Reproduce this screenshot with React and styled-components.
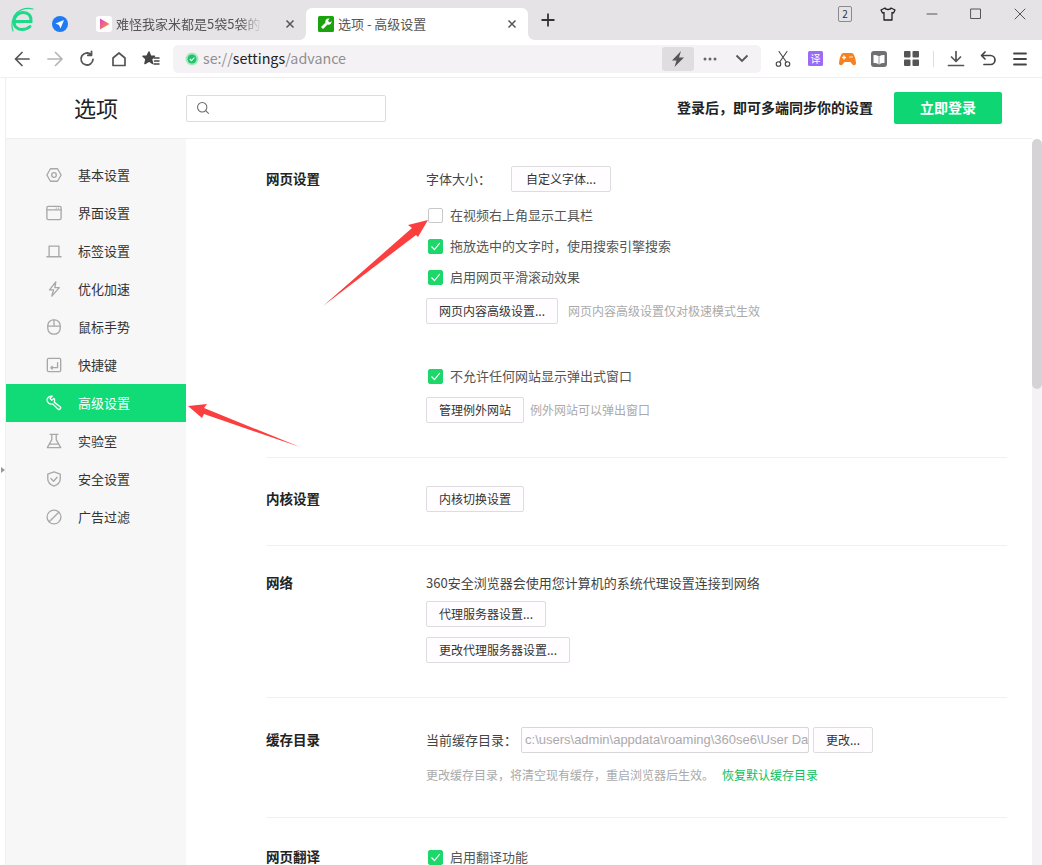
import styled, { createGlobalStyle } from "styled-components";

const GlobalStyle = createGlobalStyle`
  html, body { margin: 0; padding: 0; height: 100%; overflow: hidden; background: #fff; }
  body { font-family: "Noto Sans CJK SC", "Liberation Sans", sans-serif; font-size: 13px; color: #333; }
  * { box-sizing: border-box; }
`;

const Window = styled.div`
  position: relative;
  display: flex;
  flex-direction: column;
  height: 100vh;
  overflow: hidden;
`;

const TabStrip = styled.div`
  display: flex;
  height: 40px;
  flex: none;
  background: #e6e3e7;
  align-items: flex-end;
`;
const Logo = styled.div`
  width: 46px;
  height: 40px;
  padding: 7px 0 0 11px;
`;
const PinnedTab = styled.div`
  width: 42px;
  height: 40px;
  padding: 16px 0 0 6px;
`;
const Tab = styled.div`
  position: relative;
  display: flex;
  flex: none;
  align-items: center;
  height: 32px;
  width: ${(p) => (p.$active ? "222px" : "218px")};
  padding: 0 0 0 ${(p) => (p.$active ? "12px" : "8px")};
  background: ${(p) => (p.$active ? "#fff" : "transparent")};
  border-radius: 6px 6px 0 0;
  gap: 4px;
  color: #555;
  font-size: 13px;
  ${(p) =>
    p.$active &&
    `
    &::before, &::after {
      content: "";
      position: absolute;
      bottom: 0;
      width: 6px;
      height: 6px;
    }
    &::before { left: -6px; background: radial-gradient(circle at 0 0, #e6e3e7 5.5px, #fff 6px); }
    &::after { right: -6px; background: radial-gradient(circle at 100% 0, #e6e3e7 5.5px, #fff 6px); }
  `}
`;
const TabTitle = styled.span`
  width: ${(p) => (p.$active ? "164px" : "146px")};
  margin-top: -2px;
  white-space: nowrap;
  overflow: hidden;
  mask-image: ${(p) => (p.$active ? "none" : "linear-gradient(to right, #000 85%, transparent)")};
`;
const TabClose = styled.span`
  display: flex;
  margin-left: ${(p) => (p.$active ? "0" : "18px")};
`;
const NewTab = styled.div`
  width: 40px;
  height: 40px;
  display: flex;
  align-items: center;
  justify-content: center;
  padding-bottom: 1px;
`;
const WindowControls = styled.div`
  display: flex;
  margin-left: auto;
  align-self: flex-start;
  height: 28px;
`;
const WinButton = styled.div`
  width: 44px;
  height: 28px;
  display: flex;
  align-items: center;
  justify-content: center;
`;
const PageCount = styled.span`
  width: 14px;
  height: 16px;
  margin-left: 2px;
  border: 1px solid #8a8a8a;
  border-radius: 2px;
  font-size: 10px;
  line-height: 14px;
  text-align: center;
  color: #333;
`;

const Toolbar = styled.div`
  display: flex;
  align-items: center;
  height: 38px;
  flex: none;
  background: #fff;
  border-bottom: 1px solid #eeeeee;
  padding: 0 6px 0 7px;
`;
const ToolButton = styled.div`
  width: 32px;
  height: 32px;
  flex: none;
  display: flex;
  align-items: center;
  justify-content: center;
`;
const AddressBar = styled.div`
  display: flex;
  align-items: center;
  width: 588px;
  height: 28px;
  margin: 0 6px 0 6px;
  padding: 0 3px 0 12px;
  background: #f5f2f6;
  border-radius: 5px;
`;
const Url = styled.div`
  flex: 1;
  margin: -2px 0 0 4px;
  font-size: 14.3px;
  color: #8f8f8f;
  b { font-weight: 400; color: #222; }
`;
const BoltButton = styled.div`
  width: 32px;
  height: 24px;
  background: #e0dde1;
  border-radius: 3px;
  display: flex;
  align-items: center;
  justify-content: center;
`;
const BarIcon = styled.div`
  width: 32px;
  height: 24px;
  display: flex;
  align-items: center;
  justify-content: center;
`;
const ToolDivider = styled.div`
  width: 1px;
  height: 16px;
  background: #ddd;
  margin: 0 6px;
`;

const Page = styled.div`
  flex: 1;
  min-height: 0;
  display: flex;
  flex-direction: column;
  margin-left: 5px;
  border-left: 1px solid #eeeeee;
`;
const Header = styled.div`
  display: flex;
  align-items: center;
  height: 61px;
  flex: none;
  border-bottom: 1px solid #eeeeee;
  padding: 0 40px 0 0;
`;
const PageTitle = styled.div`
  width: 180px;
  padding: 0 0 3px 68px;
  font-size: 22px;
  color: #222;
`;
const SearchBox = styled.div`
  width: 200px;
  height: 27px;
  border: 1px solid #dcdcdc;
  border-radius: 2px;
  display: flex;
  align-items: center;
  padding-left: 9px;
`;
const LoginHint = styled.div`
  margin: 0 0 2px auto;
  font-weight: 700;
  font-size: 14px;
  color: #222;
`;
const LoginButton = styled.div`
  width: 108px;
  height: 32px;
  margin-left: 21px;
  padding-bottom: 2px;
  background: #0ed673;
  border-radius: 2px;
  color: #fff;
  font-weight: 700;
  font-size: 14px;
  display: flex;
  align-items: center;
  justify-content: center;
`;

const Body = styled.div`
  flex: 1;
  min-height: 0;
  display: flex;
`;
const Sidebar = styled.nav`
  width: 180px;
  flex: none;
  background: #f7f7f7;
  padding-top: 17px;
`;
const NavItem = styled.div`
  display: flex;
  align-items: center;
  height: 38px;
  padding-left: 40px;
  gap: 16px;
  font-size: 13px;
  color: ${(p) => (p.$active ? "#fff" : "#333")};
  background: ${(p) => (p.$active ? "#10db76" : "transparent")};
`;
const NavLabel = styled.span`
  margin-top: -2px;
`;
const Content = styled.main`
  flex: 1;
  min-width: 0;
  overflow: hidden;
  padding: 0 25px 0 80px;
`;
const Section = styled.section`
  display: grid;
  grid-template-columns: 160px 1fr;
  padding: ${(p) => p.$top}px 0 ${(p) => p.$bottom}px;
  border-bottom: ${(p) => (p.$last ? "none" : "1px solid #f0f0f0")};
`;
const SectionTitle = styled.h3`
  margin: 0;
  height: ${(p) => p.$height || 26}px;
  line-height: ${(p) => (p.$height || 26) - 2}px;
  font-size: 13.5px;
  font-weight: 700;
  color: #222;
`;
const Stack = styled.div`
  display: flex;
  flex-direction: column;
`;
const Row = styled.div`
  display: flex;
  align-items: center;
  min-height: 20px;
  margin-top: ${(p) => p.$top || 0}px;
  gap: ${(p) => p.$gap || 0}px;
  color: #444;
`;
const CheckRow = styled(Row)`
  padding-left: 2px;
  gap: 7px;
  color: #555;
`;
const Label = styled.span`
  margin-top: -2px;
`;
const Check = styled.span`
  width: 15px;
  height: 15px;
  flex: none;
  border-radius: 2px;
  border: 1px solid ${(p) => (p.$on ? "#1ed76b" : "#c8c8c8")};
  background: ${(p) => (p.$on ? "#1ed76b" : "#fff")};
  display: flex;
  align-items: center;
  justify-content: center;
`;
const Button = styled.div`
  width: ${(p) => p.$w}px;
  height: 26px;
  flex: none;
  margin-left: ${(p) => p.$left || 0}px;
  padding-bottom: 2px;
  border: 1px solid #dedcde;
  border-radius: 2px;
  background: #fffdff;
  color: #333;
  font-size: 12px;
  display: flex;
  align-items: center;
  justify-content: center;
`;
const Hint = styled.span`
  font-size: 12px;
  color: #aaa;
  margin: -2px 0 0 ${(p) => p.$left || 0}px;
`;
const PathInput = styled.div`
  width: 288px;
  height: 26px;
  margin-left: 4px;
  border: 1px solid #d8d6d8;
  border-radius: 2px;
  background: #fffdff;
  color: #aaa;
  padding: 0 3px;
  line-height: 24px;
  font-size: 13px;
  font-family: "Liberation Sans", sans-serif;
  white-space: nowrap;
  overflow: hidden;
`;
const LinkText = styled.span`
  color: #0cbf5f;
  font-size: 12px;
  margin: -2px 0 0 8px;
`;
const Scrollbar = styled.div`
  width: 10px;
  flex: none;
  background: #f5f2f6;
`;
const ScrollThumb = styled.div`
  height: 250px;
  background: #d5d3d6;
  border-radius: 5px;
  box-shadow: 0 -5px 0 0 #fff;
`;
const SideHandle = styled.div`
  position: absolute;
  left: 1px;
  top: 467px;
  border-left: 4px solid #999;
  border-top: 3px solid transparent;
  border-bottom: 3px solid transparent;
`;
const ArrowLayer = styled.svg`
  position: absolute;
  inset: 0;
  pointer-events: none;
`;

const Ico = ({ size = 18, stroke = "#555", width = 1.8, children, fill = "none" }) => (
  <svg width={size} height={size} viewBox="0 0 18 18" fill={fill} stroke={stroke} strokeWidth={width} strokeLinecap="round" strokeLinejoin="round">
    {children}
  </svg>
);

const CloseX = () => (
  <svg width="12" height="12" viewBox="0 0 12 12" stroke="#555" strokeWidth="1.5" fill="none">
    <path d="M2.5 2.5l7 7M9.5 2.5l-7 7" />
  </svg>
);

const CheckMark = () => (
  <svg width="11" height="11" viewBox="0 0 11 11" fill="none" stroke="#fff" strokeWidth="1.2">
    <path d="M1.5 5.5l3 3.2L9.8 2" />
  </svg>
);

const NAV = [
  ["基本设置", <><path d="M5 2h8l4 7-4 7H5L1 9z" /><circle cx="9" cy="9" r="2.6" /></>],
  ["界面设置", <><rect x="1" y="1.5" width="16" height="15" rx="1.5" /><path d="M1 5.5h16M11.5 3.5h.1M14 3.5h.1" /></>],
  ["标签设置", <path d="M3.500 15V3.500h11V15M1 15.500h16" />],
  ["优化加速", <path d="M11 1L4 10h4.500L6.500 17 15 7.500h-5z" />],
  ["鼠标手势", <><rect x="2" y="1" width="14" height="16" rx="6.500" /><path d="M2 8h14M9 1v7" /></>],
  ["快捷键", <><rect x="1.500" y="1.500" width="15" height="15" rx="1.500" /><path d="M13 6.500v5.500H5.500M7 10.500L5.500 12 7 13.500" /></>],
  ["高级设置", <path d="M7 1.300L4.600 3.800 6.400 6 9 3.800C10 5.500 9.800 7 9.200 8l7 5.500c1 1.200-1.200 3.800-2.500 2.500L7.500 10C4 11 .5 8 1.300 4.500 2.300 2 5 .8 7 1.300z" />],
  ["实验室", <path d="M4.500 1.500h9M6.500 1.500v6l-5 9h15l-5-9v-6M4.500 12.500h9" />],
  ["安全设置", <><path d="M9 1l7 2.500V9c0 4-3 6.500-7 8-4-1.500-7-4-7-8V3.500z" /><path d="M5.500 8.500L8.500 11.500 12.500 7" /></>],
  ["广告过滤", <><circle cx="9" cy="9" r="7.800" /><path d="M3.600 14.400L14.400 3.600" /></>],
];

export default function App() {
  return (
    <Window>
      <GlobalStyle />
      <TabStrip>
        <Logo>
          <svg width="24" height="26" viewBox="0 0 24 26" fill="none" stroke="#1ed98a" strokeLinecap="round">
            <path d="M4 14.500h16c.5-6-3-9-7.500-9C7 5.500 3 9.500 3 15c0 5 4 7.500 8 7.500 3.500 0 6-1 8-3" strokeWidth="3" />
            <path d="M2 24C.5 20 .5 15 3 9 6 4 13 0 22 2" strokeWidth="1.200" />
          </svg>
        </Logo>
        <PinnedTab>
          <svg width="16" height="16" viewBox="0 0 16 16">
            <circle cx="8" cy="8" r="8" fill="#1f7bf2" />
            <path d="M12 4L3.500 7.500 7 9l1.500 3.500z" fill="#fff" />
          </svg>
        </PinnedTab>
        <Tab>
          <svg width="16" height="16" viewBox="0 0 16 16">
            <defs>
              <linearGradient id="play" x1="0" y1="0" x2="1" y2="1">
                <stop offset="0" stopColor="#e23bd0" />
                <stop offset="1" stopColor="#ffa01e" />
              </linearGradient>
            </defs>
            <rect width="16" height="16" rx="3" fill="#fff" />
            <path d="M4 2.500L13.500 8 4 13.500z" fill="url(#play)" />
          </svg>
          <TabTitle>难怪我家米都是5袋5袋的买</TabTitle>
          <TabClose><CloseX /></TabClose>
        </Tab>
        <Tab $active>
          <svg width="16" height="16" viewBox="0 0 16 16">
            <rect width="16" height="16" rx="1.500" fill="#1aa30f" />
            <path d="M10.500 2.500a3 3 0 0 0-3 4L3 11l2 2 4.500-4.500a3 3 0 0 0 4-3.500L12 6.500 10 5l1.500-2.400z" fill="#fff" />
          </svg>
          <TabTitle $active>选项 - 高级设置</TabTitle>
          <TabClose $active><CloseX /></TabClose>
        </Tab>
        <NewTab>
          <svg width="14" height="14" viewBox="0 0 14 14" stroke="#333" strokeWidth="1.800">
            <path d="M7 .5v13M.5 7h13" />
          </svg>
        </NewTab>
        <WindowControls>
          <WinButton><PageCount>2</PageCount></WinButton>
          <WinButton>
            <Ico stroke="#222" width={1.3}><path d="M6 3L2 5l1.500 3L5 7.500V15h8V7.500L14.500 8 16 5l-4-2c-.5 2-5.500 2-6 0z" /></Ico>
          </WinButton>
          <WinButton>
            <Ico stroke="#555" width={1}><path d="M4 9h10" /></Ico>
          </WinButton>
          <WinButton>
            <Ico stroke="#555" width={1}><rect x="4" y="4" width="9.500" height="9.500" /></Ico>
          </WinButton>
          <WinButton>
            <Ico stroke="#555" width={1}><path d="M4 4l10 10M14 4L4 14" /></Ico>
          </WinButton>
        </WindowControls>
      </TabStrip>

      <Toolbar>
        <ToolButton><Ico stroke="#555" width={1.7}><path d="M15 9H1.500M8 2.500L1.500 9 8 15.500" /></Ico></ToolButton>
        <ToolButton><Ico stroke="#b5b5b5" width={1.7}><path d="M2 9h14M9.500 2.500L16 9l-6.500 6.500" /></Ico></ToolButton>
        <ToolButton><Ico stroke="#555" width={1.8}><path d="M15 9.500A6 6 0 1 1 13 4.500M13.500 1.500v3.800H9.800" /></Ico></ToolButton>
        <ToolButton><Ico stroke="#555" width={1.7}><path d="M3 8l6-5 6 5v7.500H3z" /></Ico></ToolButton>
        <ToolButton>
          <Ico stroke="#444" width={1.5}>
            <path d="M7 2l1.500 4 4 .3-3 2.700 1 4.500L7 11 3 13.500l1-4.500-3-2.700 4-.3z" fill="#444" />
            <path d="M12 8h5M12.500 11h4.500M12 14h5" />
          </Ico>
        </ToolButton>
        <AddressBar>
          <svg width="14" height="14" viewBox="0 0 14 14">
            <circle cx="7" cy="7" r="6.500" fill="#a5e8bd" />
            <circle cx="7" cy="7" r="4.500" fill="#1fc46a" />
            <path d="M4.800 7l1.600 1.600 3-3" stroke="#fff" strokeWidth="1.100" fill="none" />
          </svg>
          <Url>se://<b>settings</b>/advance</Url>
          <BoltButton>
            <svg width="14" height="16" viewBox="0 0 14 16"><path d="M10 0L1 9.500h4.500L3.500 16 13 6.500H8z" fill="#555" /></svg>
          </BoltButton>
          <BarIcon>
            <svg width="14" height="4" viewBox="0 0 14 4" fill="#666"><circle cx="2" cy="2" r="1.500" /><circle cx="7" cy="2" r="1.500" /><circle cx="12" cy="2" r="1.500" /></svg>
          </BarIcon>
          <BarIcon>
            <svg width="14" height="9" viewBox="0 0 14 9" fill="none" stroke="#555" strokeWidth="1.800"><path d="M1.500 1.500L7 7l5.500-5.500" /></svg>
          </BarIcon>
        </AddressBar>
        <ToolButton>
          <Ico stroke="#444" width={1.1}>
            <circle cx="4.500" cy="14" r="2.300" /><circle cx="13.500" cy="14" r="2.300" />
            <path d="M5.700 12L13 1.500M12.300 12L5 1.500" />
          </Ico>
        </ToolButton>
        <ToolButton>
          <svg width="15" height="15" viewBox="0 0 15 15">
            <rect width="15" height="15" rx="1.500" fill="#9b6bf5" />
            <text x="7.500" y="11.500" fontSize="10" fill="#fff" textAnchor="middle" fontFamily="Noto Sans CJK SC">译</text>
          </svg>
        </ToolButton>
        <ToolButton>
          <svg width="17" height="14" viewBox="0 0 17 14">
            <path d="M4.500 1h8C15 1 16.500 6 17 11c0 2.500-2.500 3-4 1l-1.500-2h-6L4 12c-1.500 2-4 1.500-4-1C.5 6 2 1 4.500 1z" fill="#f5811f" />
            <path d="M3.500 5.500h3M5 4v3M11 5h.1M13 5h.1" stroke="#fff" strokeWidth="1.300" strokeLinecap="round" />
          </svg>
        </ToolButton>
        <ToolButton>
          <svg width="16" height="16" viewBox="0 0 16 16">
            <rect width="16" height="16" rx="3" fill="#6f6f74" />
            <path d="M2.500 4c2 0 4 .3 5.500 1.500C9.500 4.300 11.500 4 13.500 4v8c-2 0-4 .3-5.500 1.500C6.500 12.300 4.500 12 2.500 12z" fill="#fff" />
            <path d="M8 5.500v8" stroke="#9a9a9a" />
          </svg>
        </ToolButton>
        <ToolButton>
          <svg width="15" height="15" viewBox="0 0 15 15" fill="#555">
            <rect width="6.500" height="6.500" rx="1" /><rect x="8.500" width="6.500" height="6.500" rx="1" />
            <rect y="8.500" width="6.500" height="6.500" rx="1" /><rect x="8.500" y="8.500" width="6.500" height="6.500" rx="1" />
          </svg>
        </ToolButton>
        <ToolDivider />
        <ToolButton>
          <Ico stroke="#555" width={1.7}><path d="M9 1.500V11M4.500 7L9 11.500 13.500 7M1.500 15.500h15" /></Ico>
        </ToolButton>
        <ToolButton>
          <Ico stroke="#444" width={1.7}><path d="M6 2L2.500 5.500 6 9M3 5.500h8.500a4 4 0 0 1 0 9H5" /></Ico>
        </ToolButton>
        <ToolButton>
          <Ico stroke="#444" width={1.8}><path d="M3 3.500h12M3 9h12M3 14.500h12" /></Ico>
        </ToolButton>
      </Toolbar>

      <Page>
        <Header>
          <PageTitle>选项</PageTitle>
          <SearchBox>
            <Ico size={14} stroke="#666" width={1.3}><circle cx="8" cy="8" r="6" /><path d="M12.500 12.500L16 16" /></Ico>
          </SearchBox>
          <LoginHint>登录后，即可多端同步你的设置</LoginHint>
          <LoginButton>立即登录</LoginButton>
        </Header>
        <Body>
          <Sidebar>
            {NAV.map(([label, icon]) => (
              <NavItem key={label} $active={label === "高级设置"}>
                <Ico size={16} stroke={label === "高级设置" ? "#fff" : "#a8a8a8"} width={1.5}>{icon}</Ico>
                <NavLabel>{label}</NavLabel>
              </NavItem>
            ))}
          </Sidebar>
          <Content>
            <Section $top={27} $bottom={34}>
              <SectionTitle>网页设置</SectionTitle>
              <Stack>
                <Row $gap={20}><Label>字体大小：</Label><Button $w={100}>自定义字体...</Button></Row>
                <CheckRow $top={13}><Check /><Label>在视频右上角显示工具栏</Label></CheckRow>
                <CheckRow $top={11}><Check $on><CheckMark /></Check><Label>拖放选中的文字时，使用搜索引擎搜索</Label></CheckRow>
                <CheckRow $top={11}><Check $on><CheckMark /></Check><Label>启用网页平滑滚动效果</Label></CheckRow>
                <Row $top={11}><Button $w={132}>网页内容高级设置...</Button><Hint $left={10}>网页内容高级设置仅对极速模式生效</Hint></Row>
                <CheckRow $top={42}><Check $on><CheckMark /></Check><Label>不允许任何网站显示弹出式窗口</Label></CheckRow>
                <Row $top={11}><Button $w={98}>管理例外网站</Button><Hint $left={6}>例外网站可以弹出窗口</Hint></Row>
              </Stack>
            </Section>
            <Section $top={28} $bottom={33}>
              <SectionTitle>内核设置</SectionTitle>
              <Stack><Button $w={98}>内核切换设置</Button></Stack>
            </Section>
            <Section $top={27} $bottom={34}>
              <SectionTitle $height={20}>网络</SectionTitle>
              <Stack>
                <Row><Label>360安全浏览器会使用您计算机的系统代理设置连接到网络</Label></Row>
                <Row $top={8}><Button $w={120}>代理服务器设置...</Button></Row>
                <Row $top={10}><Button $w={144}>更改代理服务器设置...</Button></Row>
              </Stack>
            </Section>
            <Section $top={29} $bottom={32}>
              <SectionTitle>缓存目录</SectionTitle>
              <Stack>
                <Row>
                  <Label>当前缓存目录：</Label>
                  <PathInput>c:\users\admin\appdata\roaming\360se6\User Data</PathInput>
                  <Button $w={60} $left={4}>更改...</Button>
                </Row>
                <Row $top={12}>
                  <Hint>更改缓存目录，将清空现有缓存，重启浏览器后生效。</Hint>
                  <LinkText>恢复默认缓存目录</LinkText>
                </Row>
              </Stack>
            </Section>
            <Section $top={29} $bottom={20} $last>
              <SectionTitle $height={20}>网页翻译</SectionTitle>
              <Stack>
                <CheckRow><Check $on><CheckMark /></Check><Label>启用翻译功能</Label></CheckRow>
              </Stack>
            </Section>
          </Content>
          <Scrollbar><ScrollThumb /></Scrollbar>
        </Body>
      </Page>
      <SideHandle />
      <ArrowLayer width="1042" height="865" viewBox="0 0 1042 865">
        <polygon points="428,220 408,225 412,228 323,306 416,235 418,237" fill="#fb3f3f" />
        <polygon points="188,406 207,404 204,408 300,447 204,414 202,418" fill="#fb3f3f" />
      </ArrowLayer>
    </Window>
  );
}
